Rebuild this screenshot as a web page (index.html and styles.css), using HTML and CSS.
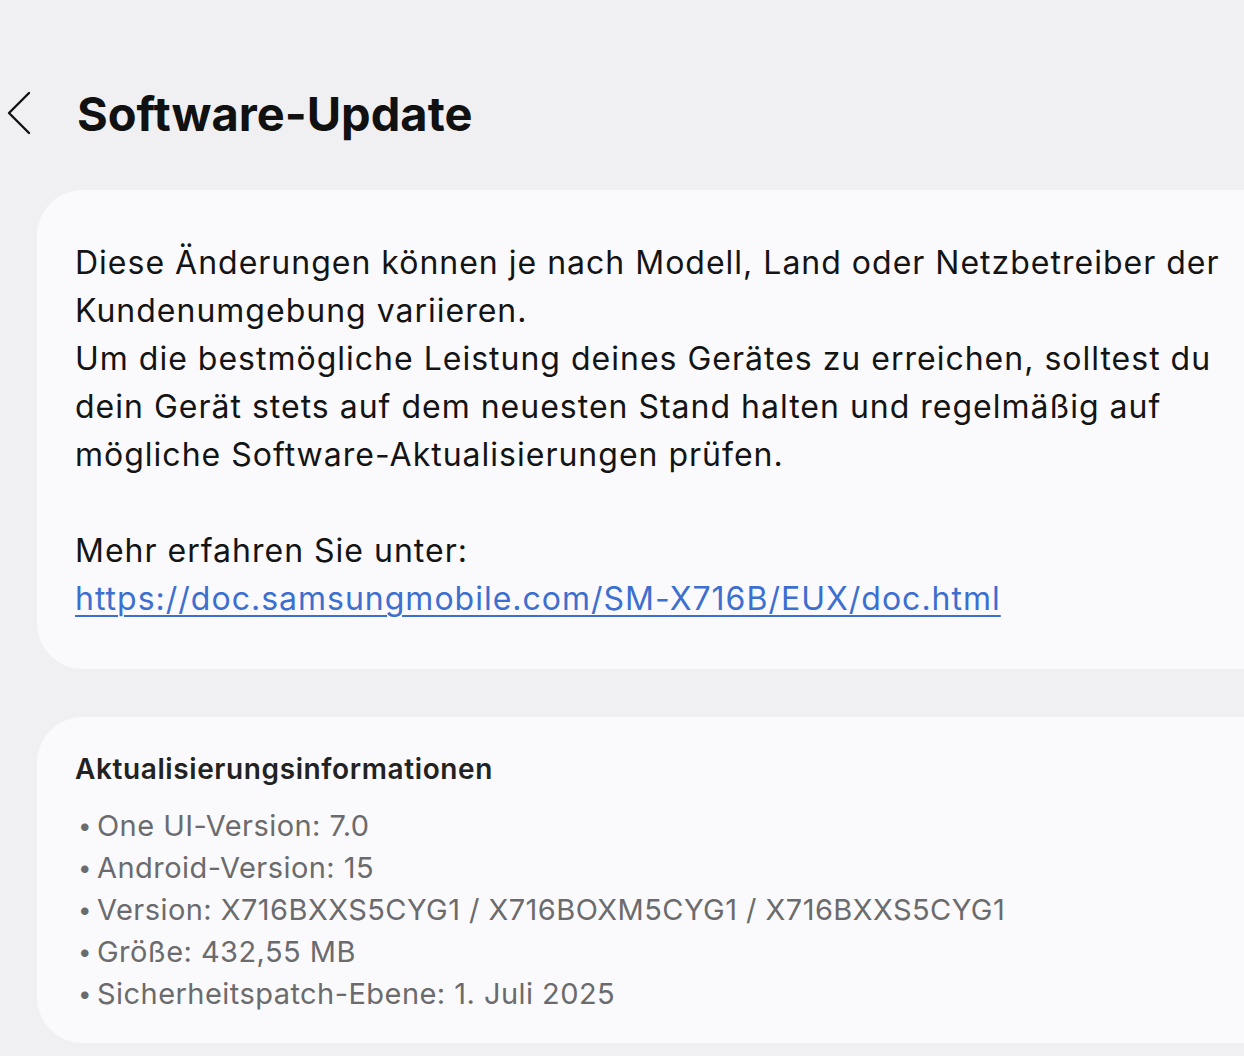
FILE: index.html
```html
<!DOCTYPE html>
<html lang="de">
<head>
    <meta charset="UTF-8">
    <meta name="viewport" content="width=device-width, initial-scale=1.0">
    <title>Software-Update</title>
    <link rel="stylesheet" href="styles.css">
</head>
<body>
    <!-- Header -->
    <div class="top-bar">
        <button class="back-btn" aria-label="Zurück">
            <svg width="30" height="46" viewBox="0 0 30 46">
                <path d="M26 3 L6 23 L26 43" fill="none" stroke="#111" stroke-width="2.4" stroke-linecap="round" stroke-linejoin="round"/>
            </svg>
        </button>
        <h1>Software-Update</h1>
    </div>

    <!-- Notes card -->
    <div class="card notes">
        <p>Diese Änderungen können je nach Modell, Land oder Netzbetreiber der Kundenumgebung variieren.<br>
        Um die bestmögliche Leistung deines Gerätes zu erreichen, solltest du dein Gerät stets auf dem neuesten Stand halten und regelmäßig auf mögliche Software-Aktualisierungen prüfen.</p>
        <p>Mehr erfahren Sie unter:<br>
        <a href="#">https://doc.samsungmobile.com/SM-X716B/EUX/doc.html</a></p>
    </div>

    <!-- Info card -->
    <div class="card info">
        <h2>Aktualisierungsinformationen</h2>
        <ul>
            <li>One UI-Version: 7.0</li>
            <li>Android-Version: 15</li>
            <li>Version: X716BXXS5CYG1 / X716BOXM5CYG1 / X716BXXS5CYG1</li>
            <li>Größe: 432,55 MB</li>
            <li>Sicherheitspatch-Ebene: 1. Juli 2025</li>
        </ul>
    </div>
</body>
</html>
```

FILE: styles.css
```css
body {
    margin: 0;
    background-color: #f0f0f2;
    font-family: "Inter", "Roboto", sans-serif;
    color: #111;
    overflow-x: hidden;
}
.top-bar {
    display: flex;
    align-items: center;
    height: 226px;
    margin-bottom: -36px;
}
.back-btn {
    background: none;
    border: none;
    padding: 0;
    margin-left: 3px;
    width: 30px;
    height: 46px;
    cursor: pointer;
}
.back-btn svg {
    display: block;
}
h1 {
    margin: 0 0 0 44px;
    font-size: 47px;
    font-weight: 700;
    letter-spacing: 0;
}
.card {
    background-color: #fafafc;
    border-radius: 46px;
    margin-left: 37px;
    margin-right: -50px;
    padding-left: 38px;
    padding-right: 58px;
}
.notes {
    padding-top: 49px;
    padding-bottom: 46px;
    margin-bottom: 48px;
}
.notes p {
    margin: 0;
    font-size: 32px;
    line-height: 48px;
    letter-spacing: 1px;
    font-weight: 400;
    color: #141414;
}
.notes p + p {
    margin-top: 48px;
}
.notes a {
    color: #3d6fd0;
    text-decoration: underline;
    text-underline-offset: 5px;
    text-decoration-thickness: 2px;
}
.info {
    padding-top: 32px;
    padding-bottom: 28px;
}
.info h2 {
    margin: 0 0 16px;
    font-size: 28px;
    line-height: 40px;
    letter-spacing: 0.6px;
    font-weight: 600;
    color: #222;
}
.info ul {
    list-style: none;
    margin: 0;
    padding: 0;
}
.info li {
    display: flex;
    font-size: 29px;
    line-height: 42px;
    letter-spacing: 0.45px;
    color: #6b6b6d;
}
.info li::before {
    content: "•";
    flex: none;
    width: 22px;
    padding-left: 3px;
    box-sizing: border-box;
    font-size: 24px;
}
```
